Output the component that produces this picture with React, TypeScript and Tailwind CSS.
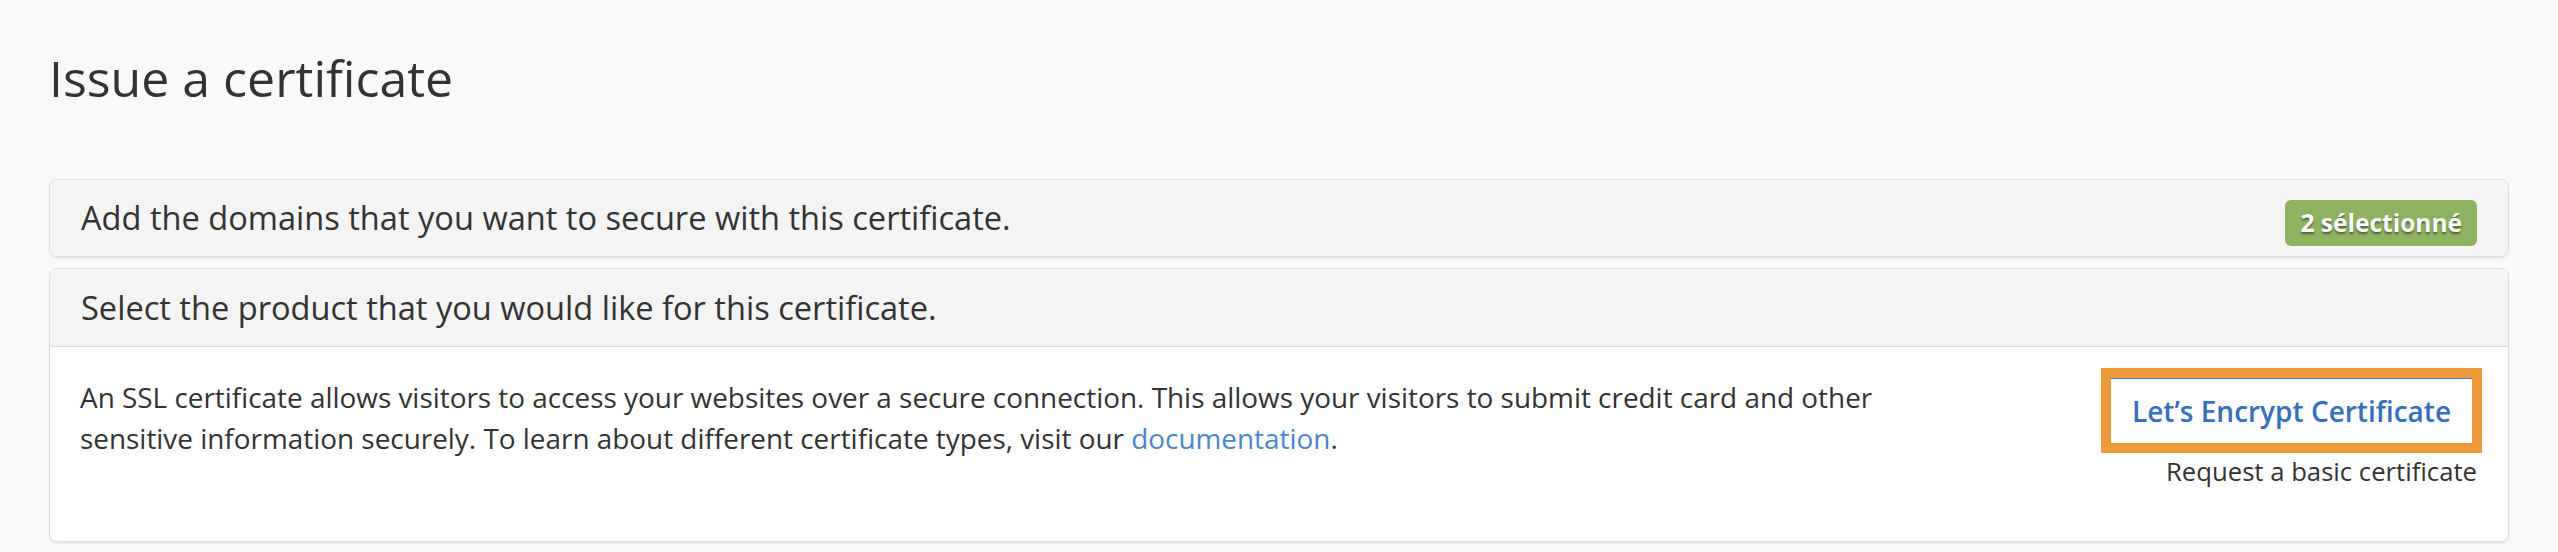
import React from "react"

const font = { fontFamily: '"Open Sans", "Liberation Sans", sans-serif' }

function PanelHeader({ children, className = "" }: { children: React.ReactNode; className?: string }) {
  return (
    <div className={`flex items-center justify-between bg-[#f4f4f4] px-[31px] text-[32.6px] leading-[40px] text-[#333] ${className}`}>
      {children}
    </div>
  )
}

export default function App() {
  return (
    <div className="h-[552px] w-full overflow-hidden bg-[#f9f9f9] px-[49px] pt-[51px]" style={font}>
      <h1 className="text-[50px] font-normal leading-[55px] text-[#333]">Issue a certificate</h1>

      {/* Domains step */}
      <div className="mt-[73px] overflow-hidden rounded-[8px] border border-[#dedede] shadow-[0_2px_2px_rgba(0,0,0,0.06)]">
        <PanelHeader className="h-[76px]">
          <span>Add the domains that you want to secure with this certificate.</span>
          <span className="mt-[10px] flex h-[46px] items-center rounded-[6px] bg-[#8db360] px-[15px] text-[24.5px] font-bold text-white [text-shadow:0_2px_2px_rgba(0,0,0,0.45)]">
            2 sélectionné
          </span>
        </PanelHeader>
      </div>

      {/* Product step */}
      <div className="mt-[11px] overflow-hidden rounded-[8px] border border-[#dedede] bg-white shadow-[0_2px_2px_rgba(0,0,0,0.06)]">
        <PanelHeader className="h-[78px] border-b border-[#dedede]">
          <span>Select the product that you would like for this certificate.</span>
        </PanelHeader>
        <div className="flex h-[194px] items-start justify-between px-[30px] pt-[21px]">
          <p className="mt-[9px] w-[1840px] text-[27.9px] leading-[41px] text-[#333]">
            An SSL certificate allows visitors to access your websites over a secure connection. This allows your visitors to submit credit card and other sensitive information securely. To learn about different certificate types, visit our{" "}
            <a href="#" className="text-[#4a86c8]">
              documentation
            </a>
            .
          </p>
          <div className="flex flex-col items-end">
            <div className="mr-[-4px] border-[10px] border-[#f0993a]">
              <button className="flex h-[65px] w-[361px] items-center justify-center border-t border-[#3a78c3] bg-white text-[28px] font-semibold text-[#3470bf]">
                Let’s Encrypt Certificate
              </button>
            </div>
            <span className="mr-[1px] text-[25.7px] leading-[37px] text-[#333]">Request a basic certificate</span>
          </div>
        </div>
      </div>
    </div>
  )
}
